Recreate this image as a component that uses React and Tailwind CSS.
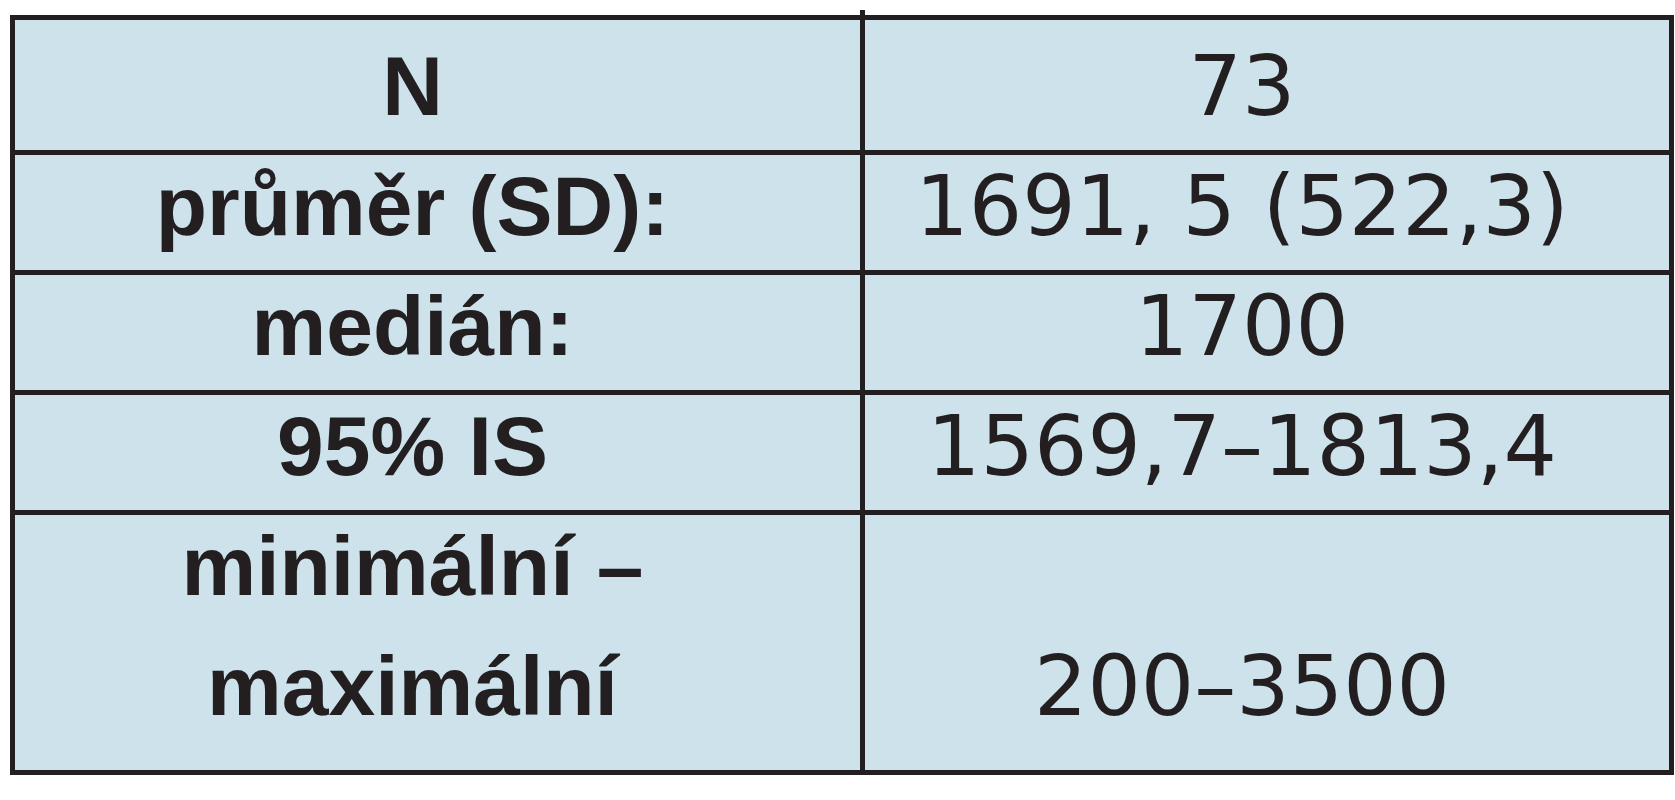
import React from 'react';

const rows = [
  { label: 'N', value: '73', height: 'h-[130px]', pb: 'pb-[4px]' },
  { label: 'průměr (SD):', value: '1691, 5 (522,3)', height: 'h-[115px]', pb: 'pb-[4px]' },
  { label: 'medián:', value: '1700', height: 'h-[115px]', pb: 'pb-[4px]' },
  { label: '95% IS', value: '1569,7–1813,4', height: 'h-[115px]', pb: 'pb-[4px]' },
  {
    label: (
      <>
        minimální –<br />
        maximální
      </>
    ),
    value: '200–3500',
    height: 'h-[255px]',
    pb: 'pb-[24px]',
  },
];

const App = () => {
  return (
    <div className="min-h-screen bg-white pt-[15px] pl-[10px]">
      <div className="relative w-[1664px]">
        {/* little overhang of the divider above the top rule */}
        <div className="absolute left-[850px] -top-[5px] w-[5px] h-[5px] bg-[#231f20]" />

        <div className="grid grid-cols-[845px_804px] gap-[5px] p-[5px] bg-[#231f20] text-[#231f20] text-[84px] leading-[120px]">
          {rows.map((row, i) => (
            <React.Fragment key={i}>
              <div
                className={`${row.height} ${row.pb} bg-[#cde2eb] flex items-end justify-center pr-[50px] text-center font-bold font-['Liberation_Sans',Arial,sans-serif]`}
              >
                <div>{row.label}</div>
              </div>
              <div
                className={`${row.height} ${row.pb} bg-[#cde2eb] flex items-end justify-center pr-[50px] text-center font-normal font-['DejaVu_Sans',Verdana,sans-serif]`}
              >
                <div className="whitespace-nowrap">{row.value}</div>
              </div>
            </React.Fragment>
          ))}
        </div>
      </div>
    </div>
  );
};

export default App;
